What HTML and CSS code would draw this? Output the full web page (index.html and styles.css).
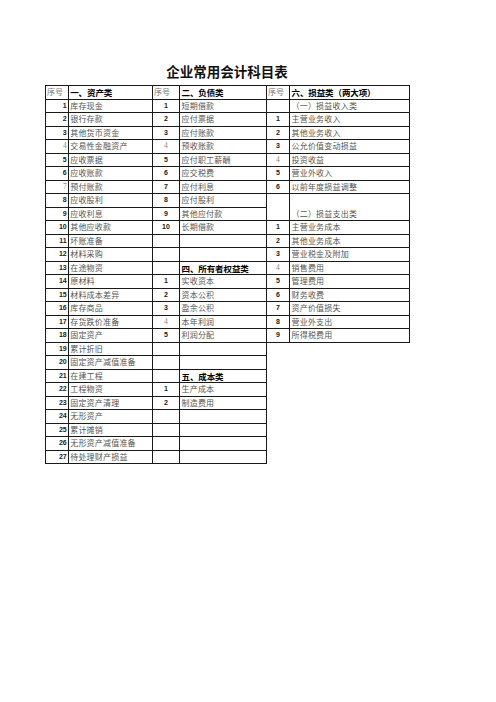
FILE: index.html
```html
<!DOCTYPE html>
<html lang="zh">
<head>
<meta charset="utf-8">
<title>企业常用会计科目表</title>
<link rel="stylesheet" href="styles.css">
</head>
<body>
<div class="sheet">
  <h1 class="title">企业常用会计科目表</h1>
  <table class="grid">
    <colgroup>
      <col class="c1"><col class="c2"><col class="c3"><col class="c4"><col class="c5"><col class="c6">
    </colgroup>
    <tbody>
      <tr class="head">
        <td class="hs">序号</td><td class="hd">一、资产类</td>
        <td class="hs">序号</td><td class="hd">二、负债类</td>
        <td class="hs">序号</td><td class="hd">六、损益类（两大项）</td>
      </tr>
      <tr><td class="n1">1</td><td class="t">库存现金</td><td class="n2">1</td><td class="t">短期借款</td><td class="n2"></td><td class="t">（一）损益收入类</td></tr>
      <tr><td class="n1">2</td><td class="t">银行存款</td><td class="n2">2</td><td class="t">应付票据</td><td class="n2">1</td><td class="t">主营业务收入</td></tr>
      <tr><td class="n1">3</td><td class="t">其他货币资金</td><td class="n2">3</td><td class="t">应付账款</td><td class="n2">2</td><td class="t">其他业务收入</td></tr>
      <tr><td class="n1 lt">4</td><td class="t">交易性金融资产</td><td class="n2 lt">4</td><td class="t">预收账款</td><td class="n2">3</td><td class="t">公允价值变动损益</td></tr>
      <tr><td class="n1">5</td><td class="t">应收票据</td><td class="n2">5</td><td class="t">应付职工薪酬</td><td class="n2 lt">4</td><td class="t">投资收益</td></tr>
      <tr><td class="n1">6</td><td class="t">应收账款</td><td class="n2">6</td><td class="t">应交税费</td><td class="n2">5</td><td class="t">营业外收入</td></tr>
      <tr><td class="n1 lt">7</td><td class="t">预付账款</td><td class="n2">7</td><td class="t">应付利息</td><td class="n2">6</td><td class="t">以前年度损益调整</td></tr>
      <tr><td class="n1">8</td><td class="t">应收股利</td><td class="n2">8</td><td class="t">应付股利</td><td class="n2 open"></td><td class="t open"></td></tr>
      <tr><td class="n1">9</td><td class="t">应收利息</td><td class="n2">9</td><td class="t">其他应付款</td><td class="n2"></td><td class="t">（二）损益支出类</td></tr>
      <tr><td class="n1">10</td><td class="t">其他应收款</td><td class="n2">10</td><td class="t">长期借款</td><td class="n2">1</td><td class="t">主营业务成本</td></tr>
      <tr><td class="n1">11</td><td class="t">坏账准备</td><td class="n2"></td><td class="t"></td><td class="n2">2</td><td class="t">其他业务成本</td></tr>
      <tr><td class="n1">12</td><td class="t">材料采购</td><td class="n2"></td><td class="t"></td><td class="n2">3</td><td class="t">营业税金及附加</td></tr>
      <tr><td class="n1">13</td><td class="t">在途物资</td><td class="n2"></td><td class="hd">四、所有者权益类</td><td class="n2 lt">4</td><td class="t">销售费用</td></tr>
      <tr><td class="n1">14</td><td class="t">原材料</td><td class="n2">1</td><td class="t">实收资本</td><td class="n2">5</td><td class="t">管理费用</td></tr>
      <tr><td class="n1">15</td><td class="t">材料成本差异</td><td class="n2">2</td><td class="t">资本公积</td><td class="n2">6</td><td class="t">财务收费</td></tr>
      <tr><td class="n1">16</td><td class="t">库存商品</td><td class="n2">3</td><td class="t">盈余公积</td><td class="n2">7</td><td class="t">资产价值损失</td></tr>
      <tr><td class="n1">17</td><td class="t">存货跌价准备</td><td class="n2 lt">4</td><td class="t">本年利润</td><td class="n2">8</td><td class="t">营业外支出</td></tr>
      <tr><td class="n1">18</td><td class="t">固定资产</td><td class="n2">5</td><td class="t">利润分配</td><td class="n2">9</td><td class="t">所得税费用</td></tr>
      <tr><td class="n1">19</td><td class="t">累计折旧</td><td class="n2"></td><td class="t"></td></tr>
      <tr><td class="n1">20</td><td class="t">固定资产减值准备</td><td class="n2"></td><td class="t"></td></tr>
      <tr><td class="n1">21</td><td class="t">在建工程</td><td class="n2"></td><td class="hd">五、成本类</td></tr>
      <tr><td class="n1">22</td><td class="t">工程物资</td><td class="n2">1</td><td class="t">生产成本</td></tr>
      <tr><td class="n1">23</td><td class="t">固定资产清理</td><td class="n2">2</td><td class="t">制造费用</td></tr>
      <tr><td class="n1">24</td><td class="t">无形资产</td><td class="n2"></td><td class="t"></td></tr>
      <tr><td class="n1">25</td><td class="t">累计摊销</td><td class="n2"></td><td class="t"></td></tr>
      <tr><td class="n1">26</td><td class="t">无形资产减值准备</td><td class="n2"></td><td class="t"></td></tr>
      <tr><td class="n1">27</td><td class="t">待处理财产损益</td><td class="n2"></td><td class="t"></td></tr>
    </tbody>
  </table>
</div>
</body>
</html>
```

FILE: styles.css
```css
html, body {
  margin: 0;
  padding: 0;
  background: #ffffff;
}

.sheet {
  width: 364px;
  margin-left: 45px;
  padding-top: 63px;
}

.title {
  margin: 0 0 6px 0;
  height: 16px;
  font-family: "Noto Sans CJK SC", "Liberation Sans", sans-serif;
  font-size: 13.5px;
  line-height: 16px;
  font-weight: 700;
  text-align: center;
  color: #111;
}

.grid {
  width: 364px;
  table-layout: fixed;
  border-collapse: collapse;
  border-spacing: 0;
}

.c1 { width: 22.7px; }
.c2 { width: 84.3px; }
.c3 { width: 27px; }
.c4 { width: 87px; }
.c5 { width: 23px; }
.c6 { width: 120px; }

.grid tr {
  height: 13.5px;
}

.grid td {
  border: 1px solid #1a1a1a;
  padding: 0;
  height: 12.5px;
  line-height: 12px;
  white-space: nowrap;
  overflow: hidden;
  font-family: "Noto Sans CJK SC", "Liberation Sans", sans-serif;
  font-size: 8px;
  color: #555;
  vertical-align: middle;
}

.grid td.hs {
  padding-left: 1px;
  color: #777;
  text-align: left;
}

.grid td.hd {
  padding-left: 1.5px;
  font-size: 8.5px;
  font-weight: 700;
  color: #000;
  letter-spacing: -0.1px;
}

.grid td.t {
  padding-left: 1.5px;
  letter-spacing: 0.2px;
}

.grid td.n1 {
  text-align: right;
  padding-right: 1px;
  font-family: "Liberation Sans", "DejaVu Sans", sans-serif;
  font-size: 7px;
  font-weight: 700;
  color: #222;
}

.grid td.n2 {
  text-align: center;
  font-family: "Liberation Sans", "DejaVu Sans", sans-serif;
  font-size: 7px;
  font-weight: 700;
  color: #222;
}

.grid td.lt {
  font-family: "Liberation Serif", serif;
  font-weight: 400;
  font-size: 7.5px;
  color: #888;
}

.grid td.open {
  border-bottom-style: hidden;
}
```
